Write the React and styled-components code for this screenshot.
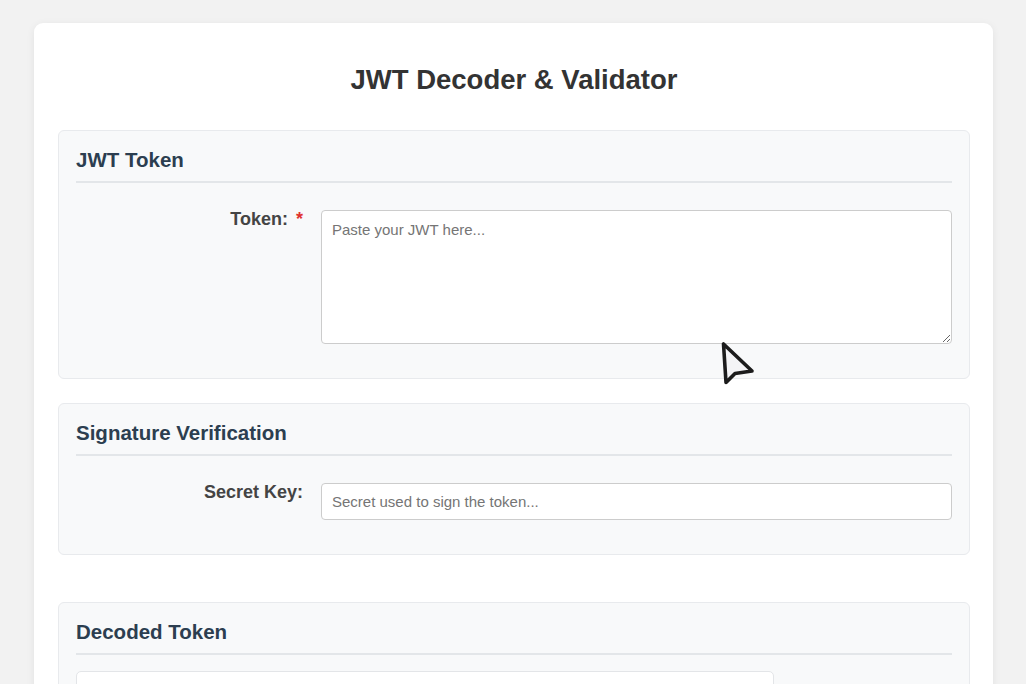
import styled, { createGlobalStyle } from "styled-components";

const GlobalStyle = createGlobalStyle`
  html, body {
    margin: 0;
    padding: 0;
    background: #f2f2f2;
  }
  body {
    font-family: "Liberation Sans", Arial, Helvetica, sans-serif;
    color: #333;
  }
  * { box-sizing: border-box; }
`;

const Page = styled.div`
  position: relative;
  padding: 23px 0 40px;
`;

const Card = styled.div`
  width: 959px;
  margin-left: 34px;
  background: #ffffff;
  border-radius: 9px;
  box-shadow: 0 2px 8px rgba(0, 0, 0, 0.07);
  padding: 24px 23px 40px 24px;
`;

const Title = styled.h1`
  margin: 17px 0 35px;
  font-size: 27.5px;
  line-height: 31px;
  font-weight: 700;
  text-align: center;
  color: #333333;
`;

const Section = styled.section`
  background: #f8f9fa;
  border: 1px solid #e8eaed;
  border-radius: 6px;
  padding: 17px;
  margin-top: ${(p) => p.$gap || 0}px;
`;

const SectionTitle = styled.h2`
  margin: 0 0 16px;
  padding-bottom: 10px;
  border-bottom: 2px solid #e3e6e9;
  font-size: 20.5px;
  line-height: 23px;
  font-weight: 700;
  color: #2c3e50;
`;

const Row = styled.div`
  display: flex;
  align-items: flex-start;
  gap: 18px;
  padding-top: 11px;
  margin-bottom: 17px;
`;

const Label = styled.label`
  width: 227px;
  flex-shrink: 0;
  text-align: right;
  font-size: 18px;
  line-height: 18px;
  font-weight: 700;
  color: #444444;
`;

const Required = styled.span`
  color: #e0322f;
  margin-left: 8px;
`;

const TokenArea = styled.textarea`
  flex: 1;
  height: 134px;
  padding: 10px;
  border: 1px solid #cccccc;
  border-radius: 4px;
  background: #ffffff;
  font-family: "Liberation Sans", Arial, sans-serif;
  font-size: 15px;
  line-height: 18px;
  color: #333;
  &::placeholder { color: #757575; }
`;

const TextInput = styled.input`
  flex: 1;
  height: 37px;
  padding: 0 10px;
  border: 1px solid #cccccc;
  border-radius: 4px;
  background: #ffffff;
  font-family: "Liberation Sans", Arial, sans-serif;
  font-size: 15px;
  color: #333;
  &::placeholder { color: #757575; }
`;

const OutputBox = styled.div`
  width: 698px;
  height: 220px;
  background: #ffffff;
  border: 1px solid #e3e5e8;
  border-radius: 5px;
`;

const Pointer = styled.svg`
  position: absolute;
  left: 719px;
  top: 340px;
  pointer-events: none;
`;

export default function App() {
  return (
    <Page>
      <GlobalStyle />
      <Card>
        <Title>JWT Decoder &amp; Validator</Title>

        <Section>
          <SectionTitle>JWT Token</SectionTitle>
          <Row>
            <Label htmlFor="token">
              Token:<Required>*</Required>
            </Label>
            <TokenArea id="token" placeholder="Paste your JWT here..." />
          </Row>
        </Section>

        <Section $gap={24}>
          <SectionTitle>Signature Verification</SectionTitle>
          <Row>
            <Label htmlFor="secret">Secret Key:</Label>
            <TextInput id="secret" type="text" placeholder="Secret used to sign the token..." />
          </Row>
        </Section>

        <Section $gap={47}>
          <SectionTitle>Decoded Token</SectionTitle>
          <OutputBox />
        </Section>
      </Card>

      <Pointer width="40" height="48" viewBox="0 0 40 48">
        <path
          d="M4.5 4 L7 42.5 L16 33.5 L33 31 Z"
          fill="#f4f4f6"
          stroke="#1c1c1c"
          strokeWidth="3.6"
          strokeLinejoin="round"
        />
      </Pointer>
    </Page>
  );
}
